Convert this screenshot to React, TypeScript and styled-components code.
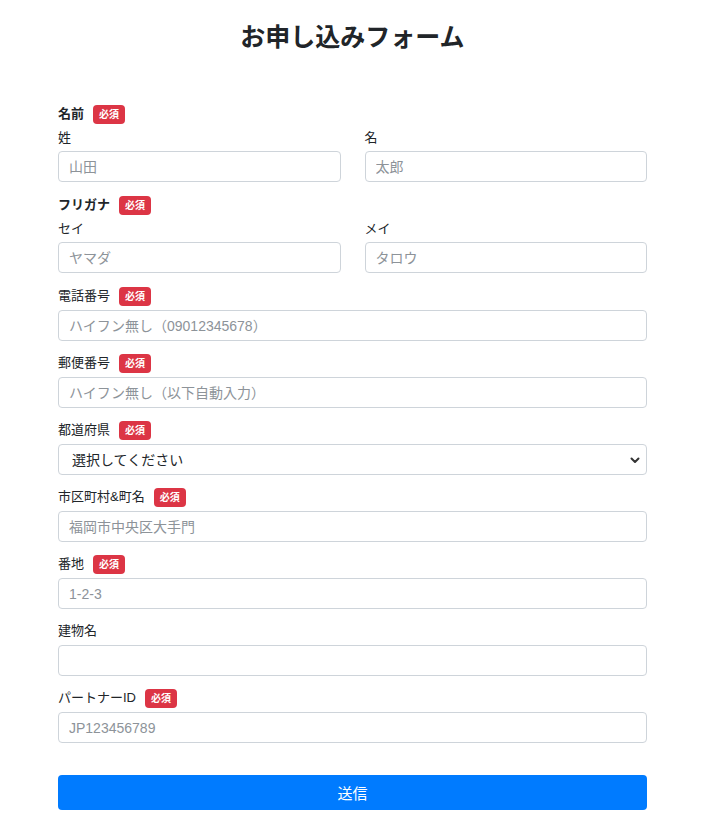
import React from "react";
import styled, { createGlobalStyle } from "styled-components";

const GlobalStyle = createGlobalStyle`
  html, body {
    margin: 0;
    padding: 0;
    background: #ffffff;
  }
  body {
    font-family: "Liberation Sans", "Noto Sans CJK JP", sans-serif;
    color: #212529;
  }
  * {
    box-sizing: border-box;
  }
`;

const Page = styled.div`
  padding: 22px 54px 40px 58px;
`;

const Title = styled.h1`
  margin: 0;
  font-size: 25px;
  line-height: 30px;
  font-weight: 700;
  text-align: center;
  color: #212529;
`;

const Form = styled.form`
  margin-top: 52px;
  display: flex;
  flex-direction: column;
`;

const Group = styled.div<{ $pair?: boolean }>`
  margin-bottom: ${(p) => (p.$pair ? "13px" : "12px")};
`;

const GroupHeader = styled.div`
  display: flex;
  align-items: center;
  height: 20px;
  margin-bottom: 4px;
`;

const GroupLabel = styled.label<{ $bold?: boolean }>`
  font-size: 13px;
  line-height: 20px;
  font-weight: ${(p) => (p.$bold ? 700 : 400)};
`;

const Badge = styled.span`
  display: inline-block;
  margin-left: 9px;
  height: 19px;
  padding: 0 6px;
  border-radius: 4px;
  background: #dc3545;
  color: #ffffff;
  font-size: 10px;
  line-height: 19px;
  font-weight: 700;
`;

const Row = styled.div`
  display: grid;
  grid-template-columns: 1fr 1fr;
  column-gap: 24px;
`;

const SubLabel = styled.label`
  display: block;
  font-size: 13px;
  line-height: 19px;
  margin-bottom: 4px;
`;

const Input = styled.input`
  display: block;
  width: 100%;
  height: 31px;
  padding: 0 10px;
  border: 1px solid #ced4da;
  border-radius: 4px;
  background: #ffffff;
  font-family: "Liberation Sans", "Noto Sans CJK JP", sans-serif;
  font-size: 14px;
  color: #212529;
  outline: none;

  &::placeholder {
    color: #8d9399;
  }
`;

const SelectWrap = styled.div`
  position: relative;
`;

const Select = styled.select`
  display: block;
  width: 100%;
  height: 31px;
  padding: 0 30px 0 13px;
  border: 1px solid #ced4da;
  border-radius: 4px;
  background: #ffffff;
  appearance: none;
  font-family: "Liberation Sans", "Noto Sans CJK JP", sans-serif;
  font-size: 14px;
  color: #212529;
  outline: none;
`;

const Chevron = styled.svg`
  position: absolute;
  right: 7px;
  top: 50%;
  width: 10px;
  height: 7px;
  margin-top: -3px;
  pointer-events: none;
`;

const SubmitButton = styled.button`
  margin-top: 20px;
  width: 100%;
  height: 35px;
  border: none;
  border-radius: 4px;
  background: #007bff;
  color: #ffffff;
  font-family: "Liberation Sans", "Noto Sans CJK JP", sans-serif;
  font-size: 15px;
  cursor: pointer;
`;

type FieldProps = {
  label: string;
  required?: boolean;
  placeholder?: string;
};

function Field({ label, required, placeholder }: FieldProps) {
  return (
    <Group>
      <GroupHeader>
        <GroupLabel>{label}</GroupLabel>
        {required && <Badge>必須</Badge>}
      </GroupHeader>
      <Input type="text" placeholder={placeholder} />
    </Group>
  );
}

type PairProps = {
  label: string;
  left: [string, string];
  right: [string, string];
};

function PairField({ label, left, right }: PairProps) {
  return (
    <Group $pair>
      <GroupHeader>
        <GroupLabel $bold>{label}</GroupLabel>
        <Badge>必須</Badge>
      </GroupHeader>
      <Row>
        <div>
          <SubLabel>{left[0]}</SubLabel>
          <Input type="text" placeholder={left[1]} />
        </div>
        <div>
          <SubLabel>{right[0]}</SubLabel>
          <Input type="text" placeholder={right[1]} />
        </div>
      </Row>
    </Group>
  );
}

export default function App() {
  return (
    <>
      <GlobalStyle />
      <Page>
        <Title>お申し込みフォーム</Title>
        <Form onSubmit={(e) => e.preventDefault()}>
          <PairField label="名前" left={["姓", "山田"]} right={["名", "太郎"]} />
          <PairField label="フリガナ" left={["セイ", "ヤマダ"]} right={["メイ", "タロウ"]} />
          <Field label="電話番号" required placeholder="ハイフン無し（09012345678）" />
          <Field label="郵便番号" required placeholder="ハイフン無し（以下自動入力）" />
          <Group>
            <GroupHeader>
              <GroupLabel>都道府県</GroupLabel>
              <Badge>必須</Badge>
            </GroupHeader>
            <SelectWrap>
              <Select defaultValue="">
                <option value="">選択してください</option>
                <option value="fukuoka">福岡県</option>
              </Select>
              <Chevron viewBox="0 0 10 7">
                <path d="M1.5 1.5 L5 5 L8.5 1.5" fill="none" stroke="#333" strokeWidth="2" strokeLinecap="round" strokeLinejoin="round" />
              </Chevron>
            </SelectWrap>
          </Group>
          <Field label="市区町村&町名" required placeholder="福岡市中央区大手門" />
          <Field label="番地" required placeholder="1-2-3" />
          <Field label="建物名" />
          <Field label="パートナーID" required placeholder="JP123456789" />
          <SubmitButton type="submit">送信</SubmitButton>
        </Form>
      </Page>
    </>
  );
}
